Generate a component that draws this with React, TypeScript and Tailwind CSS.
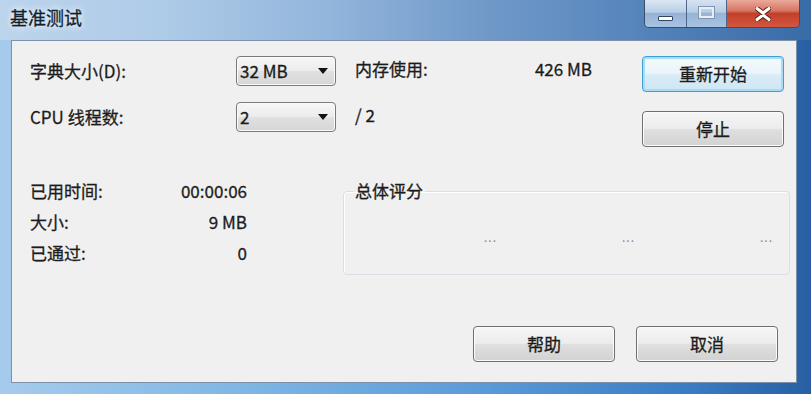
import React from "react";

const F = "font-['Noto_Sans_CJK_SC','Noto_Sans',sans-serif]";

function Btn({ label, focused = false }: { label: string; focused?: boolean }) {
  return (
    <div
      className={
        "w-[142px] h-[36px] rounded-[4px] border flex items-center justify-center text-[17px] text-[#1a1a1a] " +
        (focused
          ? "border-[#3d9fd6] bg-[linear-gradient(180deg,#f4fafd_0%,#eaf4fa_48%,#d9ecf7_52%,#cfe6f4_100%)] shadow-[inset_0_0_0_2px_#a9dcf5]"
          : "border-[#707070] bg-[linear-gradient(180deg,#f6f6f6_0%,#ececec_48%,#dfdfdf_52%,#d2d2d2_100%)] shadow-[inset_0_0_0_1px_#fbfbfb]")
      }
    >
      {label}
    </div>
  );
}

function Combo({ value }: { value: string }) {
  return (
    <div className="w-[100px] h-[30px] rounded-[4px] border border-[#7a7a7a] bg-[linear-gradient(180deg,#f7f7f7_0%,#ececec_48%,#e0e0e0_52%,#d6d6d6_100%)] shadow-[inset_0_0_0_1px_#fafafa] flex items-center pl-[3px] pr-[7px] text-[17px] text-[#1a1a1a]">
      <span>{value}</span>
      <svg className="ml-auto" width="10" height="6" viewBox="0 0 10 6">
        <path d="M0 0 H10 L5 6 Z" fill="#111" />
      </svg>
    </div>
  );
}

export default function App() {
  return (
    <div
      className={
        F +
        " w-[811px] h-[394px] overflow-hidden flex flex-col bg-[linear-gradient(90deg,#bcd4ec_0%,#aecbe8_20%,#93b6dc_40%,#7099c9_60%,#5483bb_80%,#396ba7_100%)] [-webkit-text-stroke:0.3px_currentColor]"
      }
    >
      {/* title bar */}
      <div className="h-[40px] flex items-start">
        <div className="pl-[10px] pt-[5px] text-[18px] leading-[24px] text-[#121f2e] [text-shadow:0_0_6px_rgba(255,255,255,0.95),0_0_10px_rgba(255,255,255,0.7)]">
          基准测试
        </div>
        <div className="ml-auto mr-[11px] flex h-[28px] rounded-b-[5px] border border-t-0 border-[#3b4d66] overflow-hidden">
          <div className="w-[42px] h-full flex items-end justify-center pb-[6px] bg-[linear-gradient(180deg,#dbe7f3_0%,#b9cee6_45%,#95b2d6_50%,#a8c3e2_100%)] border-r border-[#4f6785]">
            <div className="w-[15px] h-[5px] bg-white border border-[#33465e] rounded-[1px]" />
          </div>
          <div className="w-[40px] h-full flex items-center justify-center bg-[linear-gradient(180deg,#d6e3f1_0%,#b7cce4_45%,#97b3d6_50%,#a9c3e1_100%)] border-r border-[#4f6785]">
            <div className="w-[15px] h-[11px] border-[2px] border-[#e8eef6] outline outline-1 outline-[#7f97b5] -mt-[2px]" />
          </div>
          <div className="w-[72px] h-full flex items-center justify-center bg-[linear-gradient(180deg,#e9a99a_0%,#d87563_40%,#c2402a_50%,#d3563e_100%)]">
            <svg width="16" height="14" viewBox="0 0 16 14">
              <path d="M2 1.5 L8 6 L14 1.5 M2 12.5 L8 8 L14 12.5" stroke="#5a2019" strokeWidth="5" strokeLinecap="round" fill="none" />
              <path d="M2 1.5 L8 6 L14 1.5 M2 12.5 L8 8 L14 12.5" stroke="#ffffff" strokeWidth="3" strokeLinecap="round" fill="none" />
            </svg>
          </div>
        </div>
      </div>

      {/* body */}
      <div className="flex-1 flex pl-[11px] pr-[14px] pb-[11px] bg-[linear-gradient(90deg,#a6cbec_0%,#7fb6e4_30%,#5a9ad8_60%,#3a7cc4_85%,#285fa3_100%)]">
        <div className="flex-1 flex flex-col bg-[#f0f0f0] border border-[#7d90a8] text-[17px] text-[#1c1c1c]">
          {/* top section */}
          <div className="flex pt-[15px]">
            <div className="flex flex-col gap-[16px] pl-[18px]">
              <div className="flex items-center h-[30px]">
                <div className="w-[206px]">字典大小(D):</div>
                <Combo value="32 MB" />
                <div className="ml-[19px] w-[237px] flex justify-between -mt-[4px]">
                  <span>内存使用:</span>
                  <span>426 MB</span>
                </div>
              </div>
              <div className="flex items-center h-[30px]">
                <div className="w-[206px]">CPU 线程数:</div>
                <Combo value="2" />
                <div className="ml-[19px] -mt-[4px]">/ 2</div>
              </div>
            </div>
            <div className="ml-auto mr-[12px] flex flex-col gap-[19px]">
              <Btn label="重新开始" focused />
              <Btn label="停止" />
            </div>
          </div>

          {/* middle section */}
          <div className="flex mt-[33px]">
            <div className="pl-[18px] w-[235px] flex flex-col gap-[9px]">
              <div className="h-[22px] leading-[22px] flex justify-between">
                <span>已用时间:</span>
                <span>00:00:06</span>
              </div>
              <div className="h-[22px] leading-[22px] flex justify-between">
                <span>大小:</span>
                <span>9 MB</span>
              </div>
              <div className="h-[22px] leading-[22px] flex justify-between">
                <span>已通过:</span>
                <span>0</span>
              </div>
            </div>
            <fieldset className="ml-[96px] w-[447px] h-[95px] border border-[#d9dfe4] rounded-[4px] shadow-[inset_1px_1px_0_#ffffff]">
              <legend className="ml-[9px] px-[2px] leading-[22px]">总体评分</legend>
              <div className="flex justify-end pr-[16px] pt-[29px] text-[12px] leading-[12px] tracking-[1px] text-[#8a8a8a] [-webkit-text-stroke:0px]">
                <div className="w-[138px] text-right">...</div>
                <div className="w-[138px] text-right">...</div>
                <div className="w-[138px] text-right">...</div>
              </div>
            </fieldset>
          </div>

          {/* bottom buttons */}
          <div className="mt-auto flex justify-end gap-[21px] pr-[18px] pb-[20px]">
            <Btn label="帮助" />
            <Btn label="取消" />
          </div>
        </div>
      </div>
    </div>
  );
}
